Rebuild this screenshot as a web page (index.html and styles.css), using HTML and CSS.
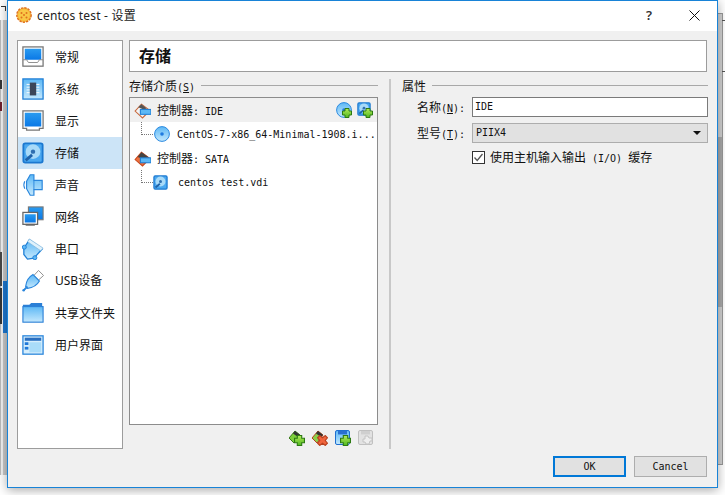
FILE: index.html
```html
<!DOCTYPE html>
<html lang="zh-CN">
<head>
  <meta charset="UTF-8">
  <title>centos test - 设置</title>
  <link rel="stylesheet" href="styles.css">
</head>
<body>
  <svg class="defs" width="0" height="0">
    <defs>
      <linearGradient id="blue" x1="0" y1="0" x2="0" y2="1">
        <stop offset="0" stop-color="#2a9bf0"/>
        <stop offset="1" stop-color="#0a78e6"/>
      </linearGradient>
      <linearGradient id="pale" x1="0" y1="0" x2="0" y2="1">
        <stop offset="0" stop-color="#5db8f5"/>
        <stop offset="1" stop-color="#c4e8fd"/>
      </linearGradient>
      <linearGradient id="green" x1="0" y1="0" x2="0" y2="1">
        <stop offset="0" stop-color="#b4ea5a"/>
        <stop offset="1" stop-color="#4fb81e"/>
      </linearGradient>
      <symbol id="hd" viewBox="0 0 24 24">
        <rect x="1.5" y="1.5" width="21" height="21" rx="2" fill="#4aa8f0" stroke="#1b78d0" stroke-width="2"/>
        <circle cx="12" cy="10.5" r="8" fill="#a8daf8"/>
        <circle cx="12" cy="10.5" r="2.4" fill="#2f6fb0"/>
        <path d="M4 20 L11 14" stroke="#1f62a8" stroke-width="3"/>
      </symbol>
      <symbol id="disc" viewBox="0 0 16 16">
        <circle cx="8" cy="8" r="7.4" fill="url(#pale)" stroke="#2c8ae0"/>
        <circle cx="8" cy="8" r="1.8" fill="#1f7ae0"/>
      </symbol>
      <symbol id="plus" viewBox="0 0 10 10">
        <path d="M3 .5 H7 V3 H9.5 V7 H7 V9.5 H3 V7 H.5 V3 H3Z" fill="url(#green)" stroke="#2c7a12"/>
      </symbol>
      <symbol id="cross" viewBox="0 0 10 10">
        <path d="M2.5 .5 L5 2.5 L7.5 .5 L9.5 2.5 L7.5 5 L9.5 7.5 L7.5 9.5 L5 7.5 L2.5 9.5 L.5 7.5 L2.5 5 L.5 2.5Z" fill="#f0643c" stroke="#b8401e"/>
      </symbol>
    </defs>
  </svg>

  <i class="corner-bit"></i>
  <div class="backdrop-left">
    <i class="bit bit-a"></i><i class="bit bit-b"></i><i class="bit bit-c"></i><i class="bit bit-d"></i>
    <div class="scroll-left"></div>
  </div>
  <div class="backdrop-right"><div class="scroll-right"></div></div>

  <div class="dialog">
    <div class="titlebar">
      <svg class="app-icon" viewBox="0 0 16 16">
        <circle cx="8" cy="8" r="7.2" fill="#f6b93c" stroke="#e0701e" stroke-width="1.4" stroke-dasharray="2.4 1"/>
        <circle cx="8" cy="8" r="5.6" fill="#f9c846"/>
        <circle cx="5.5" cy="6" r="1" fill="#e0701e"/>
        <circle cx="10.5" cy="6" r="1" fill="#e0701e"/>
        <circle cx="5.5" cy="10.5" r="1" fill="#e0701e"/>
        <circle cx="10.5" cy="10.5" r="1" fill="#e0701e"/>
        <circle cx="8" cy="8" r="1" fill="#e0701e"/>
      </svg>
      <span class="title-text">centos test - 设置</span>
      <span class="help">?</span>
      <svg class="close" viewBox="0 0 11 11"><path d="M.5 .5 L10.5 10.5 M10.5 .5 L.5 10.5" stroke="#111" fill="none"/></svg>
    </div>

    <div class="main">
      <ul class="sidebar">
        <li class="side-item">
          <svg class="side-icon" viewBox="0 0 24 24">
            <rect x="1" y="1" width="22" height="21" fill="#fff" stroke="#777" stroke-width="1.4"/>
            <rect x="3" y="3" width="18" height="12" fill="url(#blue)"/>
            <path d="M1 15 H5 L7 18 H17 L19 15 H23" fill="none" stroke="#888"/>
          </svg>
          <span>常规</span>
        </li>
        <li class="side-item">
          <svg class="side-icon" viewBox="0 0 24 24">
            <rect x="1" y="1" width="22" height="22" fill="url(#pale)" stroke="#1f7fd6" stroke-width="1.4"/>
            <path d="M5 7 H19 M5 10 H19 M5 13 H19 M5 16 H19" stroke="#fff"/>
            <rect x="8.5" y="5" width="7" height="14" fill="#3c4658"/>
          </svg>
          <span>系统</span>
        </li>
        <li class="side-item">
          <svg class="side-icon" viewBox="0 0 24 24">
            <path d="M1 1 H23 V20 H19 V22 H5 V20 H1Z" fill="#fff" stroke="#777" stroke-width="1.4"/>
            <rect x="3" y="3" width="18" height="15" fill="url(#blue)"/>
          </svg>
          <span>显示</span>
        </li>
        <li class="side-item side-item-active">
          <svg class="side-icon"><use href="#hd"/></svg>
          <span>存储</span>
        </li>
        <li class="side-item">
          <svg class="side-icon" viewBox="0 0 24 24">
            <path d="M5 8 L9 .8 H13 V7 H22 V17 H13 V23.2 H9 L5 16Z" fill="url(#pale)" stroke="#2a86dc" stroke-width="1.3"/>
            <path d="M13 7 V17" stroke="#2a86dc"/>
            <path d="M3 8 Q1 12 3 16" fill="none" stroke="#2a86dc" stroke-width="1.2"/>
          </svg>
          <span>声音</span>
        </li>
        <li class="side-item">
          <svg class="side-icon" viewBox="0 0 24 24">
            <rect x="7" y="1" width="16" height="14" fill="url(#blue)" stroke="#777" stroke-width="1.2"/>
            <rect x="1" y="7" width="16" height="13" fill="#fff" stroke="#666" stroke-width="1.4"/>
            <rect x="3" y="9" width="12" height="9" fill="url(#blue)"/>
            <path d="M4 20.5 H14" stroke="#666" stroke-width="2"/>
          </svg>
          <span>网络</span>
        </li>
        <li class="side-item">
          <svg class="side-icon" viewBox="0 0 24 24">
            <path d="M8 2 L22 12 L13 22 L6 23 L2 18 L2 11Z" fill="url(#pale)" stroke="#1f7fd6" stroke-width="1.4"/>
            <path d="M8 1 L23 11 L20.5 14 L6 4Z" fill="#dff1fb" stroke="#7fb6de" stroke-width=".8"/>
            <circle cx="2.5" cy="10" r="2.2" fill="#5db8f5" stroke="#1f7fd6"/>
            <circle cx="14" cy="21.5" r="2.2" fill="#5db8f5" stroke="#1f7fd6"/>
          </svg>
          <span>串口</span>
        </li>
        <li class="side-item">
          <svg class="side-icon" viewBox="0 0 24 24">
            <path d="M18 .5 L23.5 6 L18 11 L13 6Z" fill="#fff" stroke="#888"/>
            <path d="M12 5 L19 12 Q15 19 6 20 L4 18 Q5 9 12 5Z" fill="url(#pale)" stroke="#2a86dc" stroke-width="1.3"/>
            <path d="M6 18 L2 22" stroke="#2a86dc" stroke-width="2"/>
            <circle cx="1.8" cy="22" r="1.4" fill="#2a86dc"/>
          </svg>
          <span><span class="seg">USB</span>设备</span>
        </li>
        <li class="side-item">
          <svg class="side-icon" viewBox="0 0 24 24">
            <path d="M1 3 H8 L10 1 H22 V5 H1Z" fill="#2a7fd6"/>
            <rect x="1" y="5" width="22" height="17" fill="url(#pale)" stroke="#2a7fd6" stroke-width="1.2"/>
          </svg>
          <span>共享文件夹</span>
        </li>
        <li class="side-item">
          <svg class="side-icon" viewBox="0 0 24 24">
            <rect x="1" y="2" width="22" height="20" fill="#d6eefc" stroke="#2a86dc" stroke-width="1.4"/>
            <rect x="3" y="4" width="18" height="3.4" fill="#2a6fc0"/>
            <rect x="3" y="9" width="4" height="3" fill="#1f78d8"/>
            <rect x="3" y="14" width="4" height="3" fill="#1f78d8"/>
            <rect x="8" y="9" width="13" height="11" fill="#a9dcf9"/>
          </svg>
          <span>用户界面</span>
        </li>
      </ul>

      <div class="content">
        <div class="page-title">存储</div>

        <div class="panes">
          <div class="storage-pane">
            <div class="group-label">
              <span>存储介质<span class="mono">(<u>S</u>)</span></span>
              <i class="group-line"></i>
            </div>
            <div class="tree">
              <div class="tree-row tree-row-active">
                <svg class="ctrl-icon" viewBox="0 0 16 16">
                  <path d="M1 8.5 L7 2 L15 8 L8 15Z" fill="#f4f4f4" stroke="#c8683c"/>
                  <path d="M4 5 L7 2 L12 6 L9 7Z" fill="#555"/>
                  <rect x="6" y="7" width="10" height="4.6" fill="#5db8f5" stroke="#1f7fd6"/>
                </svg>
                <span class="tree-text">控制器<span class="mono">: IDE</span></span>
                <span class="row-actions">
                  <svg class="tool-icon" viewBox="0 0 16 16">
                    <use href="#disc"/>
                    <use href="#plus" x="6" y="6" width="10" height="10"/>
                  </svg>
                  <svg class="tool-icon" viewBox="0 0 16 16">
                    <use href="#hd" width="14" height="14"/>
                    <use href="#plus" x="6" y="6" width="10" height="10"/>
                  </svg>
                </span>
              </div>
              <div class="tree-row tree-child">
                <i class="tree-branch"></i>
                <svg class="disc-icon"><use href="#disc"/></svg>
                <span class="tree-name mono">CentOS-7-x86_64-Minimal-1908.i...</span>
              </div>
              <div class="tree-row">
                <svg class="ctrl-icon" viewBox="0 0 16 16">
                  <path d="M1 9 L7 2 L15 8 L8 15Z" fill="#f0703c" stroke="#c8481c"/>
                  <path d="M3.5 6.5 L7 2 L14 7 L7 8Z" fill="#444"/>
                  <rect x="6" y="7.4" width="10" height="4.6" fill="#5db8f5" stroke="#1f7fd6"/>
                </svg>
                <span class="tree-text">控制器<span class="mono">: SATA</span></span>
              </div>
              <div class="tree-row tree-child">
                <i class="tree-branch"></i>
                <svg class="hd-icon"><use href="#hd"/></svg>
                <span class="tree-name tree-name-hd mono">centos test.vdi</span>
              </div>
            </div>
            <div class="tree-tools">
              <svg class="tool-icon" viewBox="0 0 16 16">
                <path d="M0 8 L6 1 L11 5 L5 13Z" fill="#7ccf3a" stroke="#3a7a1a"/>
                <path d="M4 3.5 L6 1 L11 5 L9 7Z" fill="#333"/>
                <use href="#plus" x="5" y="5" width="11" height="11"/>
              </svg>
              <svg class="tool-icon" viewBox="0 0 16 16">
                <path d="M0 8 L6 1 L11 5 L5 13Z" fill="#8ccf4a" stroke="#b8401e"/>
                <path d="M4 3.5 L6 1 L11 5 L9 7Z" fill="#333"/>
                <use href="#cross" x="5" y="5" width="11" height="11"/>
              </svg>
              <svg class="tool-icon" viewBox="0 0 16 16">
                <rect x=".5" y=".5" width="14" height="14" rx="1.5" fill="url(#pale)" stroke="#1f6fd0"/>
                <rect x="3" y="1" width="9" height="3.4" fill="#2a6fd0"/>
                <use href="#plus" x="5" y="5" width="11" height="11"/>
              </svg>
              <svg class="tool-icon" viewBox="0 0 16 16">
                <rect x=".5" y=".5" width="14" height="14" rx="1.5" fill="#e2e2e2" stroke="#c0c0c0"/>
                <rect x="3" y="1" width="9" height="3.4" fill="#cfcfcf"/>
                <path d="M7 6 H10 L11 8 H14 V11 H12 L11 14 H8 L7 12 H5 V9 H7Z" fill="#eee" stroke="#c4c4c4"/>
              </svg>
            </div>
          </div>

          <div class="props-pane">
            <div class="group-label">
              <span>属性</span>
              <i class="group-line"></i>
            </div>
            <div class="form">
              <label class="form-label">名称<span class="mono">(<u>N</u>):</span></label>
              <div class="text-input mono">IDE</div>
              <label class="form-label">型号<span class="mono">(<u>T</u>):</span></label>
              <div class="combo mono">PIIX4<i class="combo-arrow"></i></div>
              <div class="check-row">
                <svg class="checkbox" viewBox="0 0 13 13">
                  <rect x=".5" y=".5" width="12" height="12" fill="#fff" stroke="#333"/>
                  <path d="M2.5 6.5 L5.2 9.5 L10.5 3" fill="none" stroke="#555" stroke-width="1.3"/>
                </svg>
                <span>使用主机输入输出<span class="mono"> (I/O) </span>缓存</span>
              </div>
            </div>
          </div>
        </div>
      </div>
    </div>

    <div class="footer">
      <button class="btn btn-default mono">OK</button>
      <button class="btn mono">Cancel</button>
    </div>
  </div>
</body>
</html>
```

FILE: styles.css
```css
* {
  box-sizing: border-box;
}
html, body {
  height: 100%;
}
body {
  margin: 0;
  height: 495px;
  overflow: hidden;
  position: relative;
  background-color: #fff;
  font-family: "Noto Sans CJK SC", sans-serif;
  font-size: 12px;
  color: #111;
}
.defs {
  position: absolute;
}
u {
  text-underline-offset: 1px;
}
.mono {
  font-family: "DejaVu Sans Mono", monospace;
  font-size: 10px;
}

/* windows behind the dialog */
.corner-bit {
  position: absolute;
  left: 1px;
  top: 6px;
  width: 5px;
  height: 5px;
  border-top: 1px solid #333;
  border-right: 1px solid #333;
}
.backdrop-left {
  position: absolute;
  left: 0;
  top: 20px;
  width: 8px;
  height: 455px;
  background-color: #f3f3f3;
  border-left: 1px solid #bbb;
}
.scroll-left {
  position: absolute;
  left: 2px;
  top: 0;
  width: 5px;
  height: 455px;
  background: linear-gradient(#c9c9c9 0 261px, #1f78d0 261px 313px, #c9c9c9 313px);
}
.bit {
  position: absolute;
  left: -1px;
  width: 2px;
  z-index: 1;
}
.bit-a { top: 60px; height: 9px; background-color: #333; }
.bit-b { top: 82px; height: 9px; background-color: #6b1f2a; }
.bit-c { top: 232px; height: 34px; background-color: #444; }
.bit-d { top: 268px; height: 36px; background-color: #333; }
.backdrop-right {
  position: absolute;
  left: 718px;
  top: 13px;
  width: 5px;
  height: 452px;
  background-color: #d2d2d2;
  border-right: 1px solid #999;
  border-bottom: 1px solid #999;
  border-top: 1px solid #999;
}
.backdrop-right::before,
.backdrop-right::after {
  content: "";
  position: absolute;
  left: 4px;
  width: 3px;
  height: 1px;
  background-color: #555;
}
.backdrop-right::before {
  top: 6px;
}
.backdrop-right::after {
  top: 57px;
}
.scroll-right {
  margin-top: 123px;
  height: 170px;
  background-color: #aaa;
}

/* dialog */
.dialog {
  position: relative;
  margin-left: 7px;
  width: 711px;
  height: 488px;
  border: 1px solid #1883d7;
  background-color: #f0f0f0;
  box-shadow: 0 2px 10px rgba(0, 0, 0, 0.35);
  display: flex;
  flex-direction: column;
}
.titlebar {
  height: 30px;
  flex: none;
  background-color: #fff;
  display: flex;
  align-items: center;
  padding-left: 8px;
  padding-bottom: 2px;
}
.app-icon {
  width: 16px;
  height: 16px;
}
.title-text {
  margin-left: 5px;
  font-family: "Noto Sans", "Noto Sans CJK SC", sans-serif;
  font-size: 12px;
  letter-spacing: 0.2px;
  color: #222;
}
.help {
  margin-left: auto;
  font-family: "Noto Sans", sans-serif;
  font-size: 13px;
  font-weight: 600;
  color: #333;
}
.close {
  width: 11px;
  height: 11px;
  margin-left: 37px;
  margin-right: 17px;
}
.main {
  flex: 1;
  display: flex;
  gap: 6px;
  padding: 9px 9px 0;
  min-height: 0;
}

/* sidebar */
.sidebar {
  list-style: none;
  margin: 0;
  padding: 0;
  width: 106px;
  height: 409px;
  flex: none;
  background-color: #fff;
  border: 1px solid #9c9c9c;
}
.side-item {
  height: 32px;
  display: flex;
  align-items: center;
  gap: 11px;
  padding-left: 4px;
  white-space: nowrap;
}
.side-item > span {
  margin-bottom: 2px;
}
.side-item-active {
  background-color: #cce4f7;
}
.side-icon {
  width: 22px;
  height: 22px;
  flex: none;
}
.seg {
  font-family: "Noto Sans", sans-serif;
}

/* right part */
.content {
  flex: 1;
  display: flex;
  flex-direction: column;
  min-width: 0;
}
.page-title {
  width: 578px;
  height: 32px;
  flex: none;
  background-color: #fff;
  border: 1px solid #9c9c9c;
  padding-left: 9px;
  font-size: 16px;
  font-weight: 700;
  line-height: 29px;
}
.panes {
  display: flex;
  height: 370px;
  margin-top: 7px;
}
.storage-pane {
  width: 249px;
  flex: none;
  display: flex;
  flex-direction: column;
}
.group-label {
  height: 18px;
  flex: none;
  display: flex;
  align-items: center;
  gap: 6px;
  padding-bottom: 6px;
  white-space: nowrap;
}
.group-line {
  flex: 1;
  height: 1px;
  background-color: #a8a8a8;
}

/* tree */
.tree {
  height: 328px;
  flex: none;
  background-color: #fff;
  border: 1px solid #8c8c8c;
}
.tree-row {
  height: 24px;
  display: flex;
  align-items: center;
  padding-left: 4px;
  white-space: nowrap;
}
.tree-row-active {
  background-color: #f0f0f0;
}
.ctrl-icon {
  width: 17px;
  height: 17px;
  flex: none;
}
.tree-text {
  margin-left: 6px;
  margin-bottom: 2px;
}
.row-actions {
  margin-left: auto;
  margin-right: 4px;
  display: flex;
  gap: 5px;
}
.tree-child {
  padding-left: 11px;
}
.tree-branch {
  width: 12px;
  height: 13px;
  align-self: flex-start;
  flex: none;
  border-left: 1px dotted #777;
  border-bottom: 1px dotted #777;
}
.disc-icon {
  width: 16px;
  height: 16px;
  margin-left: 1px;
  flex: none;
}
.hd-icon {
  width: 15px;
  height: 15px;
  flex: none;
}
.tree-name {
  margin-left: 7px;
}
.tree-name-hd {
  margin-left: 10px;
}
.tree-tools {
  display: flex;
  justify-content: flex-end;
  gap: 7px;
  padding-right: 4px;
  margin-top: 5px;
}
.tool-icon {
  width: 16px;
  height: 16px;
  flex: none;
}

/* properties */
.props-pane {
  margin-left: 11px;
  width: 319px;
  height: 370px;
  padding-left: 11px;
  border-left: 2px solid #c8c8c8;
}
.form {
  display: grid;
  grid-template-columns: 63px 236px;
  column-gap: 7px;
  row-gap: 6px;
  align-items: center;
}
.form-label {
  text-align: right;
  white-space: nowrap;
  margin-bottom: 2px;
}
.text-input {
  height: 20px;
  background-color: #fff;
  border: 1px solid #7a7a7a;
  padding-left: 2px;
  line-height: 18px;
}
.combo {
  height: 20px;
  background-color: #e1e1e1;
  border: 1px solid #adadad;
  padding-left: 3px;
  line-height: 18px;
  position: relative;
}
.combo-arrow {
  position: absolute;
  right: 6px;
  top: 7px;
  border-left: 4px solid transparent;
  border-right: 4px solid transparent;
  border-top: 4px solid #111;
}
.check-row {
  grid-column: 2;
  display: flex;
  align-items: center;
  gap: 5px;
  white-space: pre;
  height: 15px;
  margin-top: 1px;
}
.check-row > span {
  margin-bottom: 2px;
}
.checkbox {
  width: 13px;
  height: 13px;
  flex: none;
}

/* buttons */
.footer {
  height: 31px;
  flex: none;
  display: flex;
  justify-content: flex-end;
  gap: 8px;
  padding-right: 10px;
}
.btn {
  width: 73px;
  height: 21px;
  padding: 0;
  background-color: #e1e1e1;
  border: 1px solid #adadad;
  color: #111;
  cursor: pointer;
}
.btn-default {
  border: 2px solid #0078d7;
}
```
